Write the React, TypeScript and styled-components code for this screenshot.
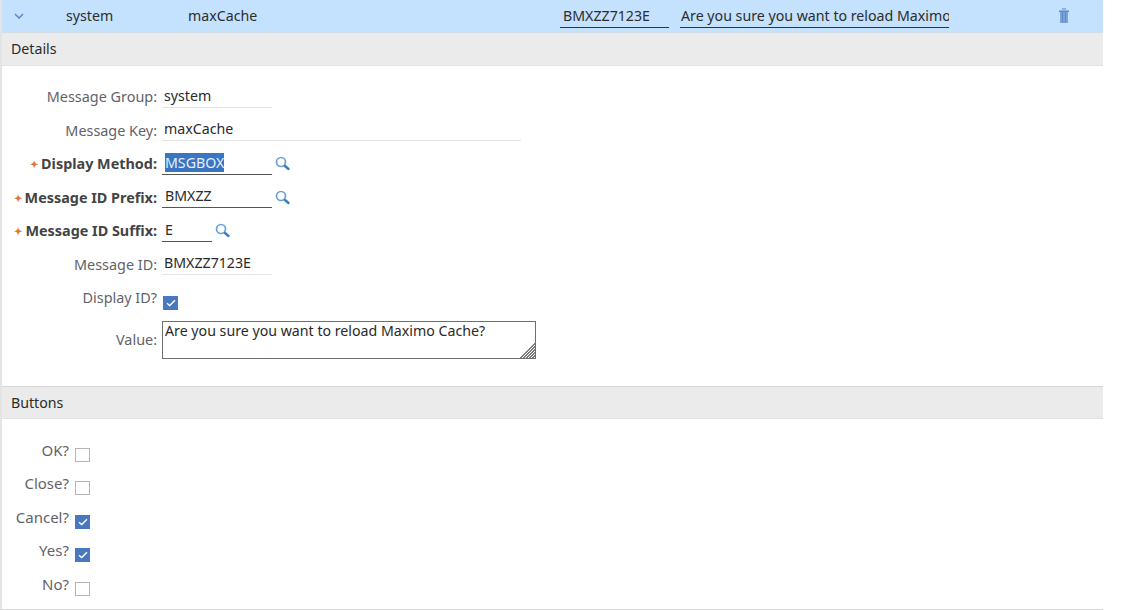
import React from "react";
import styled, { createGlobalStyle } from "styled-components";

const Global = createGlobalStyle`
  html, body { margin: 0; padding: 0; background: #fff; }
  body { font-family: "Noto Sans", "Open Sans", Arial, sans-serif; font-size: 14.2px; color: #333; overflow: hidden; }
`;

const Page = styled.div`
  width: 1103px;
  height: 610px;
  box-sizing: border-box;
  border-left: 2px solid #e4e4e4;
  border-bottom: 1px solid #d8d8d8;
  display: flex;
  flex-direction: column;
`;

const TopRow = styled.div`
  height: 33px;
  box-sizing: border-box;
  background: #c4e2fd;
  border-bottom: 2px solid #d3dde6;
  display: grid;
  grid-template-columns: 64px 122px 372px 109px 11px 269px 1fr;
  align-items: center;
`;

const Chevron = styled.svg`
  width: 10px;
  height: 6px;
  margin-left: 12px;
`;

const TopText = styled.div`
  color: #2c2c2c;
  line-height: 22px;
  white-space: nowrap;
  overflow: hidden;
`;

const TopInput = styled(TopText)<{ $pad: number }>`
  border-bottom: 1px solid #333;
  height: 22px;
  box-sizing: content-box;
  line-height: 21px;
  margin-top: 1px;
  padding-left: ${(p) => p.$pad}px;
`;

const TrashWrap = styled.div`
  display: flex;
  padding-left: 110px;
`;

const SectionHeader = styled.div<{ $top?: boolean }>`
  height: 33px;
  box-sizing: border-box;
  background: #ebebeb;
  border-top: ${(p) => (p.$top ? "1px solid #d6d6d6" : "0")};
  border-bottom: 1px solid #e2e2e2;
  padding-left: 9px;
  line-height: 31px;
  color: #2a2a2a;
`;

const Form = styled.div`
  padding-top: 14px;
  height: 320px;
  box-sizing: border-box;
`;

const ButtonsForm = styled.div`
  padding-top: 14px;
`;

const Row = styled.div`
  height: 33.5px;
  display: flex;
  align-items: center;
`;

const Label = styled.div<{ $bold?: boolean }>`
  width: 160px;
  text-align: right;
  font-size: 14.4px;
  font-weight: ${(p) => (p.$bold ? 700 : 400)};
  color: ${(p) => (p.$bold ? "#444" : "#5f6368")};
  white-space: nowrap;
  padding-right: 5px;
  box-sizing: border-box;
`;

const Required = styled.span`
  color: #e2762f;
  font-size: 10px;
  font-weight: 700;
  margin-right: 3px;
  vertical-align: 1px;
`;

const Field = styled.div<{ $w: number; $edit?: boolean }>`
  width: ${(p) => p.$w}px;
  height: 22px;
  box-sizing: border-box;
  border-bottom: 1px solid ${(p) => (p.$edit ? "#555" : "#e4e4e4")};
  padding-left: ${(p) => (p.$edit ? 3 : 2)}px;
  line-height: 20px;
  color: #2a2a2a;
`;

const Selected = styled.span`
  background: #3a75c4;
  color: #e8eef8;
`;

const SearchIcon = styled.svg`
  width: 16px;
  height: 16px;
  margin: 1px 0 0 3px;
`;

const Box = styled.div<{ $on?: boolean; $left: number }>`
  width: 15px;
  height: 14px;
  box-sizing: border-box;
  margin: 10px 0 0 ${(p) => p.$left}px;
  background: ${(p) => (p.$on ? "#4a78bf" : "#fff")};
  border: 1px solid ${(p) => (p.$on ? "#4a78bf" : "#b5b5b5")};
  display: flex;
  align-items: center;
  justify-content: center;
`;

const ValueRow = styled.div`
  display: flex;
  align-items: center;
  height: 38px;
  margin-top: 6px;
`;

const ValueArea = styled.textarea`
  width: 374px;
  height: 38px;
  box-sizing: border-box;
  border: 1px solid #6f6f6f;
  padding: 0 2px;
  margin: 0;
  font-family: inherit;
  font-size: 14.2px;
  line-height: 17px;
  color: #2a2a2a;
  resize: both;
  outline: none;
  display: block;

  &::-webkit-resizer {
    background:
      linear-gradient(135deg, #fff 50%, transparent 50%),
      repeating-linear-gradient(135deg, #7c7c7c 0, #7c7c7c 1px, #fff 1px, #fff 2.1px);
  }
`;

const ButtonLabel = styled(Label)`
  width: 68px;
  padding-right: 1px;
  font-size: 15px;
`;

const Check = () => (
  <svg width="10" height="8" viewBox="0 0 10 8">
    <path d="M1 4.2 L3.7 6.6 L9 1.2" fill="none" stroke="#fff" strokeWidth="1.4" />
  </svg>
);

const Search = () => (
  <SearchIcon viewBox="0 0 16 16">
    <circle cx="6" cy="6" r="4.5" fill="none" stroke="#6a9fd6" strokeWidth="1.7" />
    <path d="M10 10 L13.5 13" stroke="#3b7cbd" strokeWidth="2.4" strokeLinecap="round" />
  </SearchIcon>
);

const Trash = () => (
  <svg width="10" height="15" viewBox="0 0 10 15">
    <rect x="3" y="0" width="4" height="2" fill="#8fb2e4" />
    <rect x="0" y="2.5" width="10" height="1.5" fill="#5b87c8" />
    <path d="M1 4 H9 V15 H1 Z" fill="#7ba4dc" />
    <path d="M3.5 4.5 V14.5 M6.5 4.5 V14.5" stroke="#5b87c8" strokeWidth="1" />
  </svg>
);

const buttons: [string, boolean][] = [
  ["OK?", false],
  ["Close?", false],
  ["Cancel?", true],
  ["Yes?", true],
  ["No?", false],
];

export default function App() {
  return (
    <>
      <Global />
      <Page>
        <TopRow>
          <Chevron viewBox="0 0 10 6">
            <path d="M1 1 L5 5 L9 1" fill="none" stroke="#5b87c8" strokeWidth="1.5" />
          </Chevron>
          <TopText>system</TopText>
          <TopText>maxCache</TopText>
          <TopInput $pad={3}>BMXZZ7123E</TopInput>
          <div />
          <TopInput $pad={1}>Are you sure you want to reload Maximo Cache?</TopInput>
          <TrashWrap>
            <Trash />
          </TrashWrap>
        </TopRow>
        <SectionHeader>Details</SectionHeader>
        <Form>
          <Row>
            <Label>Message Group:</Label>
            <Field $w={110}>system</Field>
          </Row>
          <Row>
            <Label>Message Key:</Label>
            <Field $w={359}>maxCache</Field>
          </Row>
          <Row>
            <Label $bold>
              <Required>✦</Required>Display Method:
            </Label>
            <Field $w={110} $edit>
              <Selected>MSGBOX</Selected>
            </Field>
            <Search />
          </Row>
          <Row>
            <Label $bold>
              <Required>✦</Required>Message ID Prefix:
            </Label>
            <Field $w={110} $edit>BMXZZ</Field>
            <Search />
          </Row>
          <Row>
            <Label $bold>
              <Required>✦</Required>Message ID Suffix:
            </Label>
            <Field $w={50} $edit>E</Field>
            <Search />
          </Row>
          <Row>
            <Label>Message ID:</Label>
            <Field $w={110}>BMXZZ7123E</Field>
          </Row>
          <Row>
            <Label>Display ID?</Label>
            <Box $on $left={1}>
              <Check />
            </Box>
          </Row>
          <ValueRow>
            <Label>Value:</Label>
            <ValueArea readOnly value="Are you sure you want to reload Maximo Cache?" />
          </ValueRow>
        </Form>
        <SectionHeader $top>Buttons</SectionHeader>
        <ButtonsForm>
          {buttons.map(([name, on]) => (
            <Row key={name}>
              <ButtonLabel>{name}</ButtonLabel>
              <Box $on={on} $left={5}>{on && <Check />}</Box>
            </Row>
          ))}
        </ButtonsForm>
      </Page>
    </>
  );
}
